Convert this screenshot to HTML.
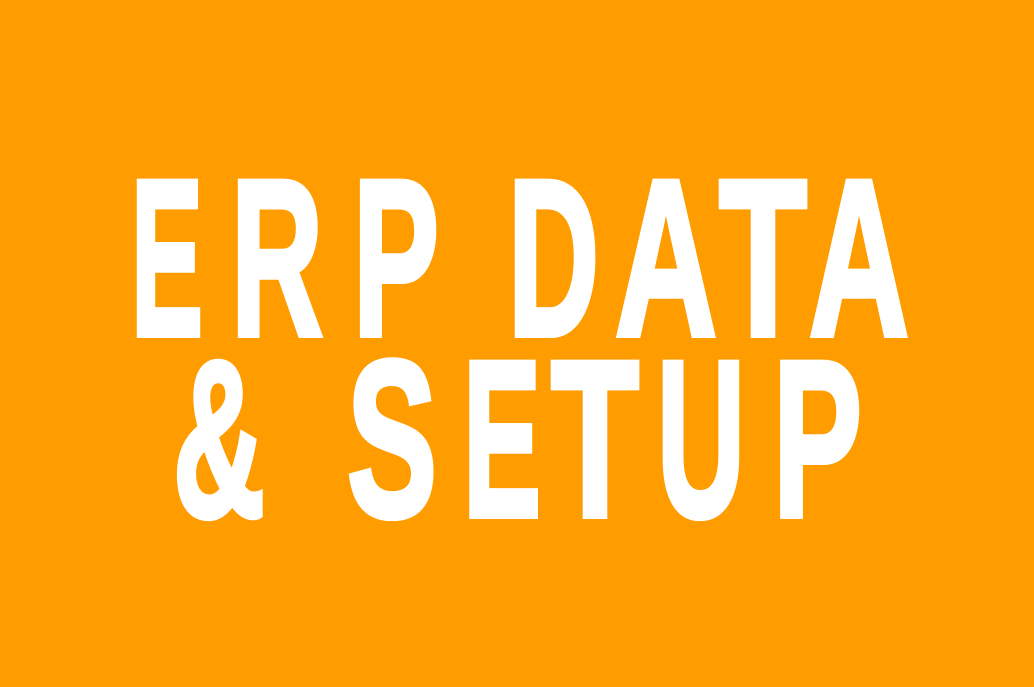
<!DOCTYPE html>
<html><head><meta charset="utf-8"><style>
html,body{margin:0;padding:0;background:#FF9C00;width:1034px;height:687px;overflow:hidden}
svg text{font-family:"Liberation Sans",sans-serif;font-weight:bold;font-size:223px;fill:#fff;stroke:#fff;stroke-width:6;stroke-linejoin:miter}
</style></head><body>
<svg width="1034" height="687" viewBox="0 0 1034 687" xmlns="http://www.w3.org/2000/svg">
<rect width="1034" height="687" fill="#FF9C00"/>
<g>
<text x="131" y="335" textLength="72" lengthAdjust="spacingAndGlyphs">E</text>
<text x="231" y="335" textLength="92" lengthAdjust="spacingAndGlyphs">R</text>
<text x="353" y="335" textLength="86" lengthAdjust="spacingAndGlyphs">P</text>
<text x="508" y="335" textLength="91" lengthAdjust="spacingAndGlyphs">D</text>
<text x="615" y="335" textLength="102" lengthAdjust="spacingAndGlyphs">A</text>
<text x="719" y="335" textLength="88" lengthAdjust="spacingAndGlyphs">T</text>
<text x="809" y="335" textLength="100" lengthAdjust="spacingAndGlyphs">A</text>
</g>
<g>
<text x="173" y="516" textLength="92" lengthAdjust="spacingAndGlyphs">&amp;</text>
<text x="347" y="516" textLength="90" lengthAdjust="spacingAndGlyphs">S</text>
<text x="463" y="516" textLength="78" lengthAdjust="spacingAndGlyphs">E</text>
<text x="551" y="516" textLength="88" lengthAdjust="spacingAndGlyphs">T</text>
<text x="657" y="516" textLength="88" lengthAdjust="spacingAndGlyphs">U</text>
<text x="773" y="516" textLength="89" lengthAdjust="spacingAndGlyphs">P</text>
</g>
</svg>
</body></html>
